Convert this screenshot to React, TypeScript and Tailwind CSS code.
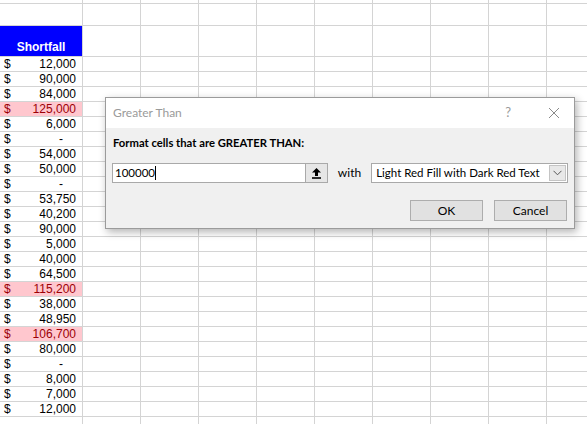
const amounts = [
  12000, 90000, 84000, 125000, 6000, 0, 54000, 50000, 0, 53750, 40200, 90000,
  5000, 40000, 64500, 115200, 38000, 48950, 106700, 80000, 0, 8000, 7000, 12000,
];

const emptyCols = [0, 1, 2, 3, 4, 5, 6, 7, 8];

function EmptyCells() {
  return (
    <>
      {emptyCols.map((c) => (
        <div key={c} className="w-[58px] shrink-0 border-r border-[#d4d4d4]" />
      ))}
    </>
  );
}

function AmountRow({ value }: { value: number }) {
  const hot = value > 100000;
  return (
    <div className="flex h-[15px] border-b border-[#d4d4d4]">
      <div
        className={`w-[83px] shrink-0 border-r border-[#d4d4d4] flex items-center justify-between pl-[4px] text-[12px] leading-[14px] ${
          hot ? 'bg-[#ffc7ce] text-[#9c0006]' : 'text-black'
        }`}
      >
        <span>$</span>
        {value === 0 ? (
          <span className="pr-[19px]">-</span>
        ) : (
          <span className="pr-[6px]">{value.toLocaleString('en-US')}</span>
        )}
      </div>
      <EmptyCells />
    </div>
  );
}

function UploadIcon() {
  return (
    <svg width="11" height="12" viewBox="0 0 11 12">
      <path d="M5.5 1 L10 5.5 H7 V9 H4 V5.5 H1 Z" fill="#000" />
      <rect x="1" y="10.2" width="9" height="1.6" fill="#000" />
    </svg>
  );
}

function GreaterThanDialog() {
  return (
    <div className="absolute left-[105px] top-[97px] w-[470px] h-[132px] border border-[#9b9b9b] bg-[#f0f0f0] shadow-[2px_3px_8px_rgba(0,0,0,0.3)] flex flex-col font-['Lato','Noto_Sans',sans-serif] text-[11.5px] text-black whitespace-nowrap">
      {/* title bar */}
      <div className="h-[30px] bg-white flex items-center pl-[7px] pr-[14px]">
        <span className="text-[#9a9a9a] flex-1 text-[12px]">Greater Than</span>
        <span className="text-[#9a9a9a] text-[13px] mr-[37px]">?</span>
        <svg width="12" height="12" viewBox="0 0 12 12">
          <path d="M1 1 L11 11 M11 1 L1 11" stroke="#8a8a8a" strokeWidth="1" />
        </svg>
      </div>

      {/* body */}
      <div className="flex flex-col px-[6px]">
        <p className="mt-[7px] ml-[1px] h-[16px] leading-[16px] font-bold text-[11.25px]">
          Format cells that are GREATER THAN:
        </p>

        <div className="mt-[12px] flex items-center h-[20px]">
          <div className="w-[194px] h-[20px] bg-white border border-[#a9a9a9] flex items-center pl-[2px]">
            <span>100000</span>
            <span className="w-px h-[14px] bg-black" />
          </div>
          <div className="w-[22px] h-[20px] bg-[#e6e6e6] border border-[#a9a9a9] border-l-0 flex items-center justify-center">
            <UploadIcon />
          </div>
          <span className="ml-[10px] mr-[10px] text-[12px]">with</span>
          <div className="w-[197px] h-[20px] bg-white border border-[#a9a9a9] flex items-center pl-[4px] pr-[1px]">
            <span className="flex-1">Light Red Fill with Dark Red Text</span>
            <div className="w-[17px] h-[16px] bg-[#e8e8e8] border border-[#c4c4c4] flex items-center justify-center">
              <svg width="9" height="6" viewBox="0 0 9 6">
                <path d="M0.5 0.8 L4.5 4.8 L8.5 0.8" stroke="#555" strokeWidth="1" fill="none" />
              </svg>
            </div>
          </div>
        </div>

        <div className="mt-[17px] flex justify-end gap-[11px] pr-[1px]">
          <button className="w-[73px] h-[21px] bg-[#e1e1e1] border border-[#adadad] leading-none text-[12px]">
            OK
          </button>
          <button className="w-[73px] h-[21px] bg-[#e1e1e1] border border-[#adadad] leading-none text-[12px]">
            Cancel
          </button>
        </div>
      </div>
    </div>
  );
}

export default function App() {
  return (
    <div className="relative w-[587px] h-[424px] overflow-hidden bg-white font-['Liberation_Sans',Arial,sans-serif]">
      {/* sheet */}
      <div className="flex flex-col">
        <div className="flex h-[4px] border-b border-[#d4d4d4]">
          <div className="w-[83px] shrink-0 border-r border-[#d4d4d4]" />
          <EmptyCells />
        </div>
        <div className="flex h-[22px] border-b border-[#d4d4d4]">
          <div className="w-[83px] shrink-0 border-r border-[#d4d4d4]" />
          <EmptyCells />
        </div>
        <div className="flex h-[31px] border-b border-[#d4d4d4]">
          <div className="w-[83px] shrink-0 border-r border-[#d4d4d4] bg-[#0000ff] flex items-end justify-center pb-[2px]">
            <span className="text-white font-bold text-[12px] leading-[14px]">Shortfall</span>
          </div>
          <EmptyCells />
        </div>
        {amounts.map((v, i) => (
          <AmountRow key={i} value={v} />
        ))}
        <div className="flex h-[15px] border-b border-[#d4d4d4]">
          <div className="w-[83px] shrink-0 border-r border-[#d4d4d4]" />
          <EmptyCells />
        </div>
      </div>

      <GreaterThanDialog />
    </div>
  );
}
